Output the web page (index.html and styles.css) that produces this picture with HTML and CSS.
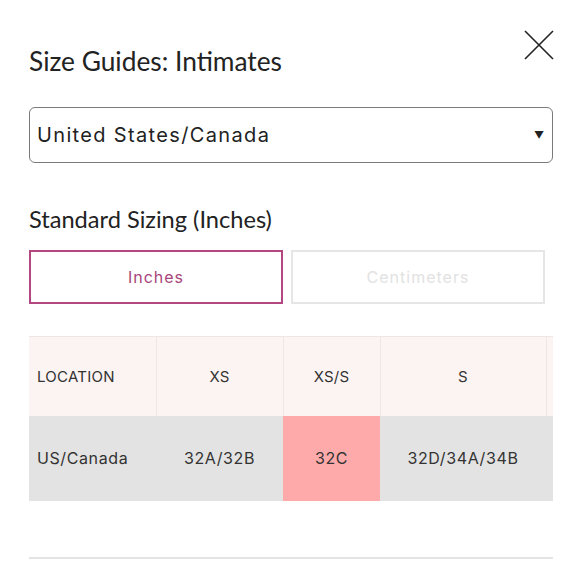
FILE: index.html
```html
<!DOCTYPE html>
<html>
<head>
<meta charset="utf-8">
<link rel="stylesheet" href="styles.css">
</head>
<body>
<div class="modal">
  <div class="header">
    <h1 class="title">Size Guides: Intimates</h1>
    <button class="close" aria-label="Close">
      <svg width="30" height="30" viewBox="0 0 30 30"><path d="M1 1 L29 29 M29 1 L1 29" stroke="#222" stroke-width="1.6" fill="none"/></svg>
    </button>
  </div>
  <div class="select">
    <span class="select-text">United States/Canada</span>
    <span class="arrow">&#9660;</span>
  </div>
  <h2 class="subtitle">Standard Sizing (Inches)</h2>
  <div class="toggle">
    <div class="tbtn active">Inches</div>
    <div class="tbtn">Centimeters</div>
  </div>
  <div class="table-wrap">
    <table class="sizes">
      <tr class="head">
        <td class="c1 left">LOCATION</td>
        <td class="c2">XS</td>
        <td class="c3">XS/S</td>
        <td class="c4">S</td>
        <td class="c5"></td>
      </tr>
      <tr class="data">
        <td class="left">US/Canada</td>
        <td>32A/32B</td>
        <td class="hl">32C</td>
        <td>32D/34A/34B</td>
        <td></td>
      </tr>
    </table>
  </div>
  <div class="rule"></div>
</div>
</body>
</html>
```
FILE: styles.css
```css
html, body { margin: 0; padding: 0; background: #fff; }
body { width: 580px; height: 580px; overflow: hidden; }
.modal { padding: 30px 27px 0 29px; font-family: "Inter", "Roboto", sans-serif; color: #2b2b2b; }
.header { display: flex; justify-content: space-between; align-items: flex-start; height: 77px; }
.title { margin: 16px 0 0 0; font-family: "Lato", sans-serif; font-weight: 400; font-size: 26.3px; color: #222; line-height: 30px; }
.close { border: 0; background: none; padding: 0; width: 30px; height: 30px; margin: 0 -1px 0 0; }
.close svg { display: block; }
.select { box-sizing: border-box; height: 56px; border: 1.5px solid #7a7a7a; border-radius: 6px; display: flex; align-items: center; justify-content: space-between; padding: 0 8px 0 7px; }
.select-text { font-size: 20px; letter-spacing: 1.35px; color: #222; }
.arrow { font-size: 10px; color: #222; }
.subtitle { margin: 41px 0 0 0; font-family: "Lato", sans-serif; font-weight: 400; font-size: 23.6px; line-height: 30px; color: #222; }
.toggle { display: flex; gap: 8px; margin-top: 16px; width: 516px; }
.tbtn { box-sizing: border-box; flex: 1; height: 54px; border: 2px solid #e6e6e6; color: #e2e2e2; display: flex; align-items: center; justify-content: center; font-size: 16px; letter-spacing: 1px; }
.tbtn.active { border-color: #b2487f; color: #a8457a; }
.table-wrap { margin-top: 32px; width: 524px; overflow: hidden; }
.sizes { border-collapse: collapse; table-layout: fixed; width: 640px; font-size: 15px; letter-spacing: 0.25px; color: #333; }
.sizes td { text-align: center; padding: 0; box-sizing: border-box; }
.sizes .left { text-align: left; padding-left: 8px; }
.head td { background: #fcf4f2; height: 79px; border-top: 1px solid #ece7e5; border-left: 1px solid #ece7e5; }
.head td:first-child { border-left: 0; }
.data td { background: #e3e3e3; height: 85px; font-size: 16px; letter-spacing: 0.6px; }
.data td.hl { background: #ffaaaa; }
.c1 { width: 127px; }
.c2 { width: 127px; }
.c3 { width: 97px; }
.c4 { width: 166px; }
.c5 { width: 123px; }
.rule { margin-top: 56px; height: 2px; background: #e4e4e4; width: 524px; }
```
